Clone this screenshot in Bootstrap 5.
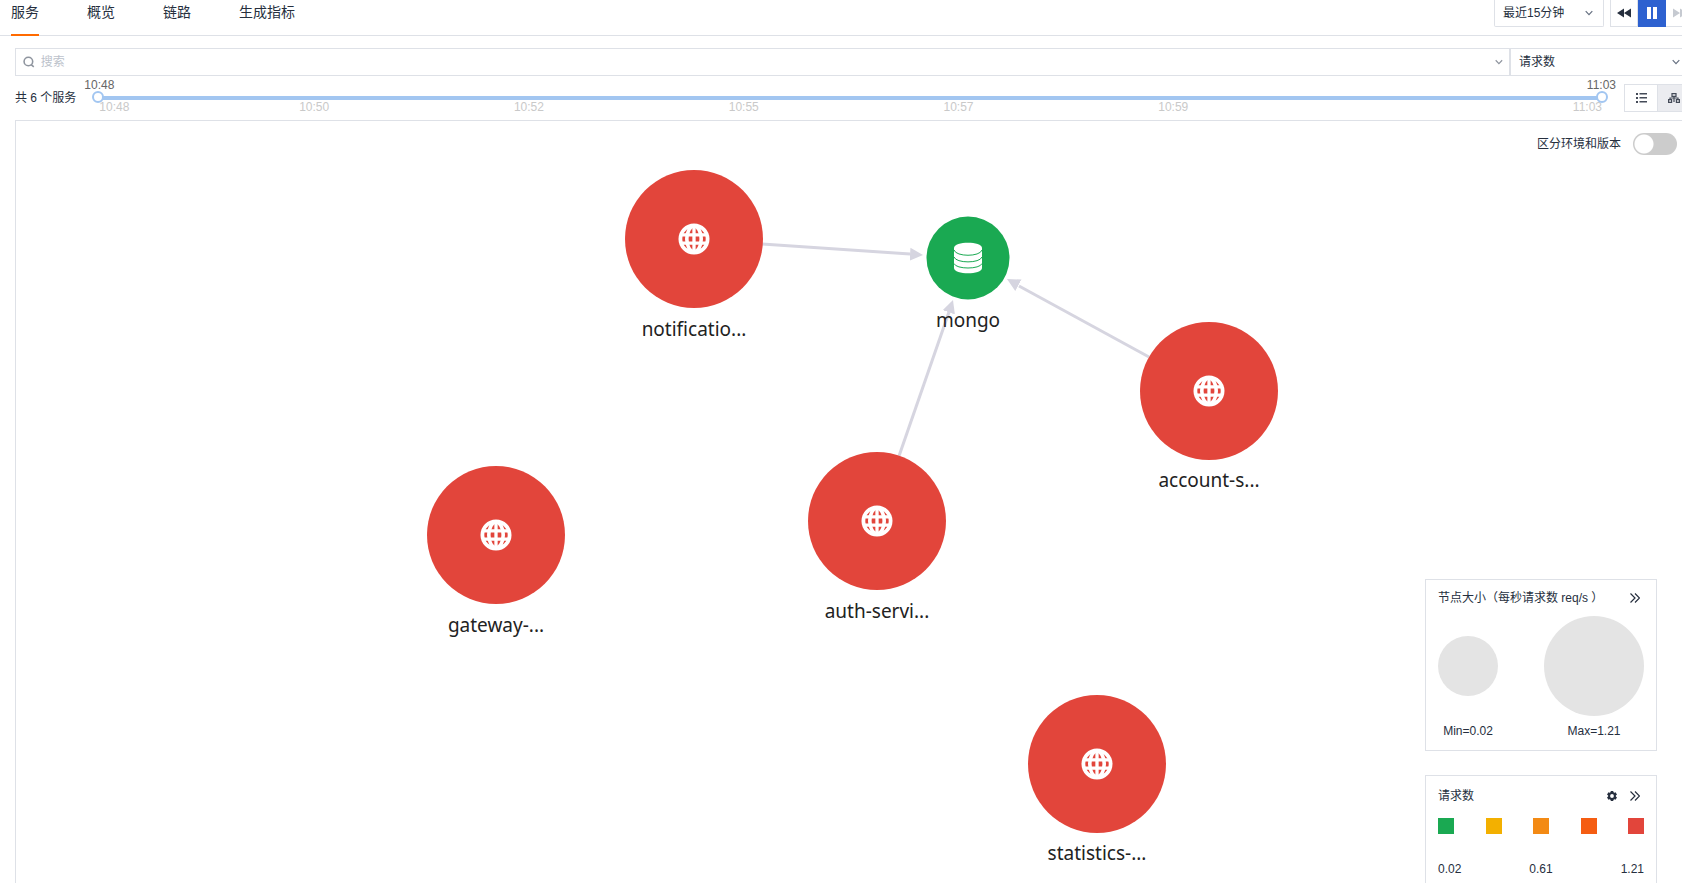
<!DOCTYPE html>
<html lang="zh-CN">
<head>
<meta charset="utf-8">
<meta name="viewport" content="width=device-width, initial-scale=1">
<title>服务</title>
<link href="https://cdn.jsdelivr.net/npm/bootstrap@5.3.0/dist/css/bootstrap.min.css" rel="stylesheet">
<style>
:root { --line: #dee1e7; --ink: #262f3e; --track: #a2c6f1; }
body { font: 12px/16px "Liberation Sans", "Noto Sans CJK SC", sans-serif; color: var(--ink); background: #fff; overflow: hidden; }
.topbar { height: 36px; border-bottom: 1px solid var(--line); padding-left: 11px; margin-right: -12px; }
.tabs { gap: 48px; }
.tabs .nav-link { font-size: 14px; line-height: 24px; height: 36px; padding: 0; color: var(--ink); border-bottom: 2px solid transparent; }
.tabs .nav-link.active { border-color: #ff6a00; }
.form-select, .form-control { font-size: 12px; line-height: 16px; color: var(--ink); border: 1px solid var(--line); border-radius: 0; min-height: 0; height: 28px; padding: 0 8px; }
.form-select { background-image: url("data:image/svg+xml,%3Csvg xmlns='http://www.w3.org/2000/svg' viewBox='0 0 8 8'%3E%3Cpath d='M.7 2.2 4 5.6 7.3 2.2' fill='none' stroke='%23667080' stroke-width='1.2'/%3E%3C/svg%3E"); background-size: 8px 8px; background-position: right 10px center; }
.range-select { width: 110px; height: 27px; border-top: 0; border-radius: 0 0 2px 2px; }
.toolbar { gap: 6px; }
.tool { width: 28px; height: 27px; padding: 0; border: 1px solid var(--line); border-top: 0; background: #fff; border-radius: 0; display: flex; align-items: center; justify-content: center; color: var(--ink); }
.tool-on { background: #2d61d0; border-color: #2d61d0; color: #fff; }
.tool-off { color: #c6cad1; border-left: 0; }
.workspace { padding-left: 15px; margin-right: -9px; }
.search-box { border: 1px solid var(--line); height: 28px; padding: 0 6px 0 7px; gap: 6px; }
.search-box .form-control { border: 0; height: 24px; padding: 0; }
.search-box .form-control::placeholder { color: #bcc2cb; }
.metric-select { width: 181px; }
.time-row { gap: 16px; height: 44px; }
.time-track { padding-bottom: 4px; }
.time-ends { line-height: 14px; margin: 0 -8px; color: #666; }
.time-slider { position: relative; height: 10px; }
.time-slider::before { content: ""; position: absolute; left: 6px; right: 6px; top: 4px; height: 4px; background: var(--track); }
.time-slider input { position: absolute; inset: 0; width: 100%; height: 10px; margin: 0; appearance: none; -webkit-appearance: none; background: none; pointer-events: none; }
.time-slider input::-webkit-slider-thumb { -webkit-appearance: none; width: 12px; height: 12px; border: 2px solid var(--track); border-radius: 50%; background: #fff; pointer-events: auto; }
.time-ticks { display: grid; grid-template-columns: 200fr 215fr 215fr 215fr 215fr 415fr auto; line-height: 10px; padding: 0 6px 2px 7px; color: #c9c9c9; }
.view-btn { width: 34px; height: 28px; padding: 0; border: 1px solid var(--line); border-radius: 0; background: #fff; color: #444b58; display: flex; align-items: center; justify-content: center; }
.view-btn + .view-btn { margin-left: -1px; background: #ebecf0; }
.topology { position: relative; border: 1px solid var(--line); border-bottom: 0; overflow: hidden; }
.topology > svg { position: absolute; inset: 0; width: 100%; height: 100%; }
.node-name { font: 19px "Noto Sans", "Noto Sans CJK SC", sans-serif; fill: #222; text-anchor: middle; }
.env-switch { position: absolute; top: 12px; right: 13px; gap: 12px; }
.env-switch .form-check-input { width: 44px; height: 22px; margin: 0; border: 0; background-color: #ccc; background-image: radial-gradient(circle at 11px 11px, #fff 9px, transparent 10px); background-position: left center; background-size: 100% 100%; }
.legends { position: absolute; top: 458px; right: 33px; width: 232px; gap: 24px; }
.legend-box { border: 1px solid var(--line); background: #fff; padding: 10px 12px 11px; }
.legend-colors { padding: 12px 12px 24px; }
.dots { padding: 10px 0 7px; }
.swatches { padding: 14px 0 27px; }
.plain-btn { border: 0; background: none; padding: 0; color: var(--ink); display: flex; }
.dot { border-radius: 50%; background: #e4e4e4; }
.dot-min { width: 60px; height: 60px; }
.dot-max { width: 100px; height: 100px; }
.cap-min { width: 60px; }
.cap-max { width: 100px; }
.swatch { width: 16px; height: 16px; }
</style>
</head>
<body class="vh-100 d-flex flex-column">
<header class="topbar d-flex justify-content-between align-items-start flex-shrink-0">
  <nav class="nav tabs">
    <a class="nav-link active" href="#">服务</a>
    <a class="nav-link" href="#">概览</a>
    <a class="nav-link" href="#">链路</a>
    <a class="nav-link" href="#">生成指标</a>
  </nav>
  <div class="toolbar d-flex">
    <select class="form-select range-select" aria-label="时间范围"><option>最近15分钟</option></select>
    <div class="d-flex">
      <button class="tool" type="button" aria-label="后退"><svg width="14" height="10" viewBox="0 0 14 10" fill="currentColor"><path d="M7 .5v9L0 5zM14 .5v9L7 5z"/></svg></button>
      <button class="tool tool-on" type="button" aria-label="暂停"><svg width="12" height="12" viewBox="0 0 12 12" fill="currentColor"><path d="M1 0h4v12H1zM7 0h4v12H7z"/></svg></button>
      <button class="tool tool-off" type="button" aria-label="前进" disabled><svg width="14" height="10" viewBox="0 0 14 10" fill="currentColor"><path d="M0 .5v9L7 5zM7 .5v9L14 5z"/></svg></button>
    </div>
  </div>
</header>

<main class="workspace d-flex flex-column flex-grow-1 pt-2">
  <div class="d-flex mt-1">
    <div class="search-box d-flex align-items-center flex-grow-1">
      <svg width="12" height="12" viewBox="0 0 12 12" fill="none" stroke="#8f959f" stroke-width="1.6"><circle cx="5.5" cy="5.5" r="4.4"/><path d="M8 8.500 11 11"/></svg>
      <input class="form-control" type="text" placeholder="搜索" aria-label="搜索">
      <svg width="8" height="8" viewBox="0 0 8 8" fill="none" stroke="#8f959f" stroke-width="1.2"><path d="M.7 2.200 4 5.600 7.300 2.200"/></svg>
    </div>
    <select class="form-select metric-select" aria-label="指标"><option>请求数</option></select>
  </div>

  <div class="time-row d-flex align-items-center flex-shrink-0">
    <span class="text-nowrap">共 6 个服务</span>
    <div class="time-track flex-grow-1">
      <div class="time-ends d-flex justify-content-between"><span>10:48</span><span>11:03</span></div>
      <div class="time-slider">
        <input type="range" min="0" max="15" value="0" aria-label="开始时间">
        <input type="range" min="0" max="15" value="15" aria-label="结束时间">
      </div>
      <div class="time-ticks"><span>10:48</span><span>10:50</span><span>10:52</span><span>10:55</span><span>10:57</span><span>10:59</span><span>11:03</span></div>
    </div>
    <div class="d-flex">
      <button class="view-btn" type="button" aria-label="列表"><svg width="11" height="10" viewBox="0 0 11 10" fill="currentColor"><path d="M0 0h2v2H0zM3.500 0H11v1.500H3.500zM0 4h2v2H0zM3.500 4H11v1.500H3.500zM0 8h2v2H0zM3.500 8H11v1.500H3.500z"/></svg></button>
      <button class="view-btn" type="button" aria-label="拓扑"><svg width="12" height="10" viewBox="0 0 12 10" fill="none" stroke="currentColor" stroke-width="1.200"><path d="M4 .6h4v2.800H4zM.6 6.600h3v2.800h-3zM8.400 6.600h3v2.800h-3zM6 3.400V9M2 6.600V5h8v1.600"/></svg></button>
    </div>
  </div>

  <section class="topology flex-grow-1" aria-label="服务拓扑">
    <svg>
      <defs>
        <marker id="arrow" markerUnits="userSpaceOnUse" markerWidth="14" markerHeight="14" refX="13" refY="7" orient="auto"><path d="M0 0.500 13 7 0 13.500z" fill="#d6d5e0"/></marker>
        <g id="globe">
          <circle r="69" fill="#e2453b"/>
          <circle r="15.500" fill="#fff"/>
          <circle r="11.700" fill="#e2453b"/>
          <g fill="none" stroke="#fff">
            <path stroke-width="3.300" d="M-12-4.200H12M-12 4.200H12M0-13V13"/>
            <ellipse rx="7.200" ry="13" stroke-width="3.600"/>
          </g>
        </g>
      </defs>
      <g stroke="#d6d5e0" stroke-width="3" fill="none">
        <path d="M746 123 894 133"/><path d="M883 335 933 191"/><path d="M1133 236 1003 165"/>
      </g>
      <g stroke="none" fill="none" marker-end="url(#arrow)">
        <path d="M746 123 907 134"/><path d="M883 335 937 179"/><path d="M1133 236 991 158"/>
      </g>
      <use href="#globe" x="678" y="118"/>
      <use href="#globe" x="1193" y="270"/>
      <use href="#globe" x="861" y="400"/>
      <use href="#globe" x="480" y="414"/>
      <use href="#globe" x="1081" y="643"/>
      <g transform="translate(952 137)">
        <circle r="41.500" fill="#1aa952"/>
        <path fill="#fff" d="M-14-10C-14-17 14-17 14-10V10C14 17-14 17-14 10z"/>
        <path fill="none" stroke="#1aa952" d="M-14-8C-12-1 12-1 14-8M-14-1C-12 5.500 12 5.500 14-1M-14 5.500C-12 11.500 12 11.500 14 5.500"/>
      </g>
      <g class="node-name">
        <text x="678" y="215">notificatio...</text>
        <text x="952" y="206">mongo</text>
        <text x="1193" y="366">account-s...</text>
        <text x="861" y="497">auth-servi...</text>
        <text x="480" y="511">gateway-...</text>
        <text x="1081" y="739">statistics-...</text>
      </g>
    </svg>

    <div class="env-switch form-switch d-flex align-items-center p-0">
      <label for="env">区分环境和版本</label>
      <input class="form-check-input" type="checkbox" role="switch" id="env">
    </div>

    <div class="legends d-flex flex-column">
      <div class="legend-box">
        <div class="d-flex justify-content-between align-items-center">
          <span>节点大小（每秒请求数 req/s ）</span>
          <button class="plain-btn me-1" type="button" aria-label="收起"><svg width="10" height="10" viewBox="0 0 10 10" fill="none" stroke="currentColor" stroke-width="1.200"><path d="M.5.5 5 5 .5 9.500M5 .5 9.500 5 5 9.500"/></svg></button>
        </div>
        <div class="dots d-flex justify-content-between align-items-center">
          <div class="dot dot-min"></div>
          <div class="dot dot-max"></div>
        </div>
        <div class="d-flex justify-content-between text-center"><span class="cap-min">Min=0.02</span><span class="cap-max">Max=1.21</span></div>
      </div>
      <div class="legend-box legend-colors">
        <div class="d-flex align-items-center">
          <span class="me-auto">请求数</span>
          <button class="plain-btn me-2" type="button" aria-label="设置"><svg width="12" height="12" viewBox="-6 -6 12 12"><g stroke="currentColor" stroke-width="2.600"><path d="M0-5V5M-4.330-2.500 4.330 2.500M-4.330 2.500 4.330-2.500"/></g><circle r="2.900" fill="#fff" stroke="currentColor" stroke-width="2"/></svg></button>
          <button class="plain-btn ms-1 me-1" type="button" aria-label="收起"><svg width="10" height="10" viewBox="0 0 10 10" fill="none" stroke="currentColor" stroke-width="1.200"><path d="M.5.5 5 5 .5 9.500M5 .5 9.500 5 5 9.500"/></svg></button>
        </div>
        <div class="swatches d-flex justify-content-between">
          <span class="swatch" style="background:#1aa952"></span><span class="swatch" style="background:#f3b000"></span><span class="swatch" style="background:#f38a14"></span><span class="swatch" style="background:#f55d12"></span><span class="swatch" style="background:#e2453b"></span>
        </div>
        <div class="d-flex justify-content-between"><span>0.02</span><span>0.61</span><span>1.21</span></div>
      </div>
    </div>
  </section>
</main>
<script src="https://cdn.jsdelivr.net/npm/bootstrap@5.3.0/dist/js/bootstrap.bundle.min.js"></script>
</body>
</html>
